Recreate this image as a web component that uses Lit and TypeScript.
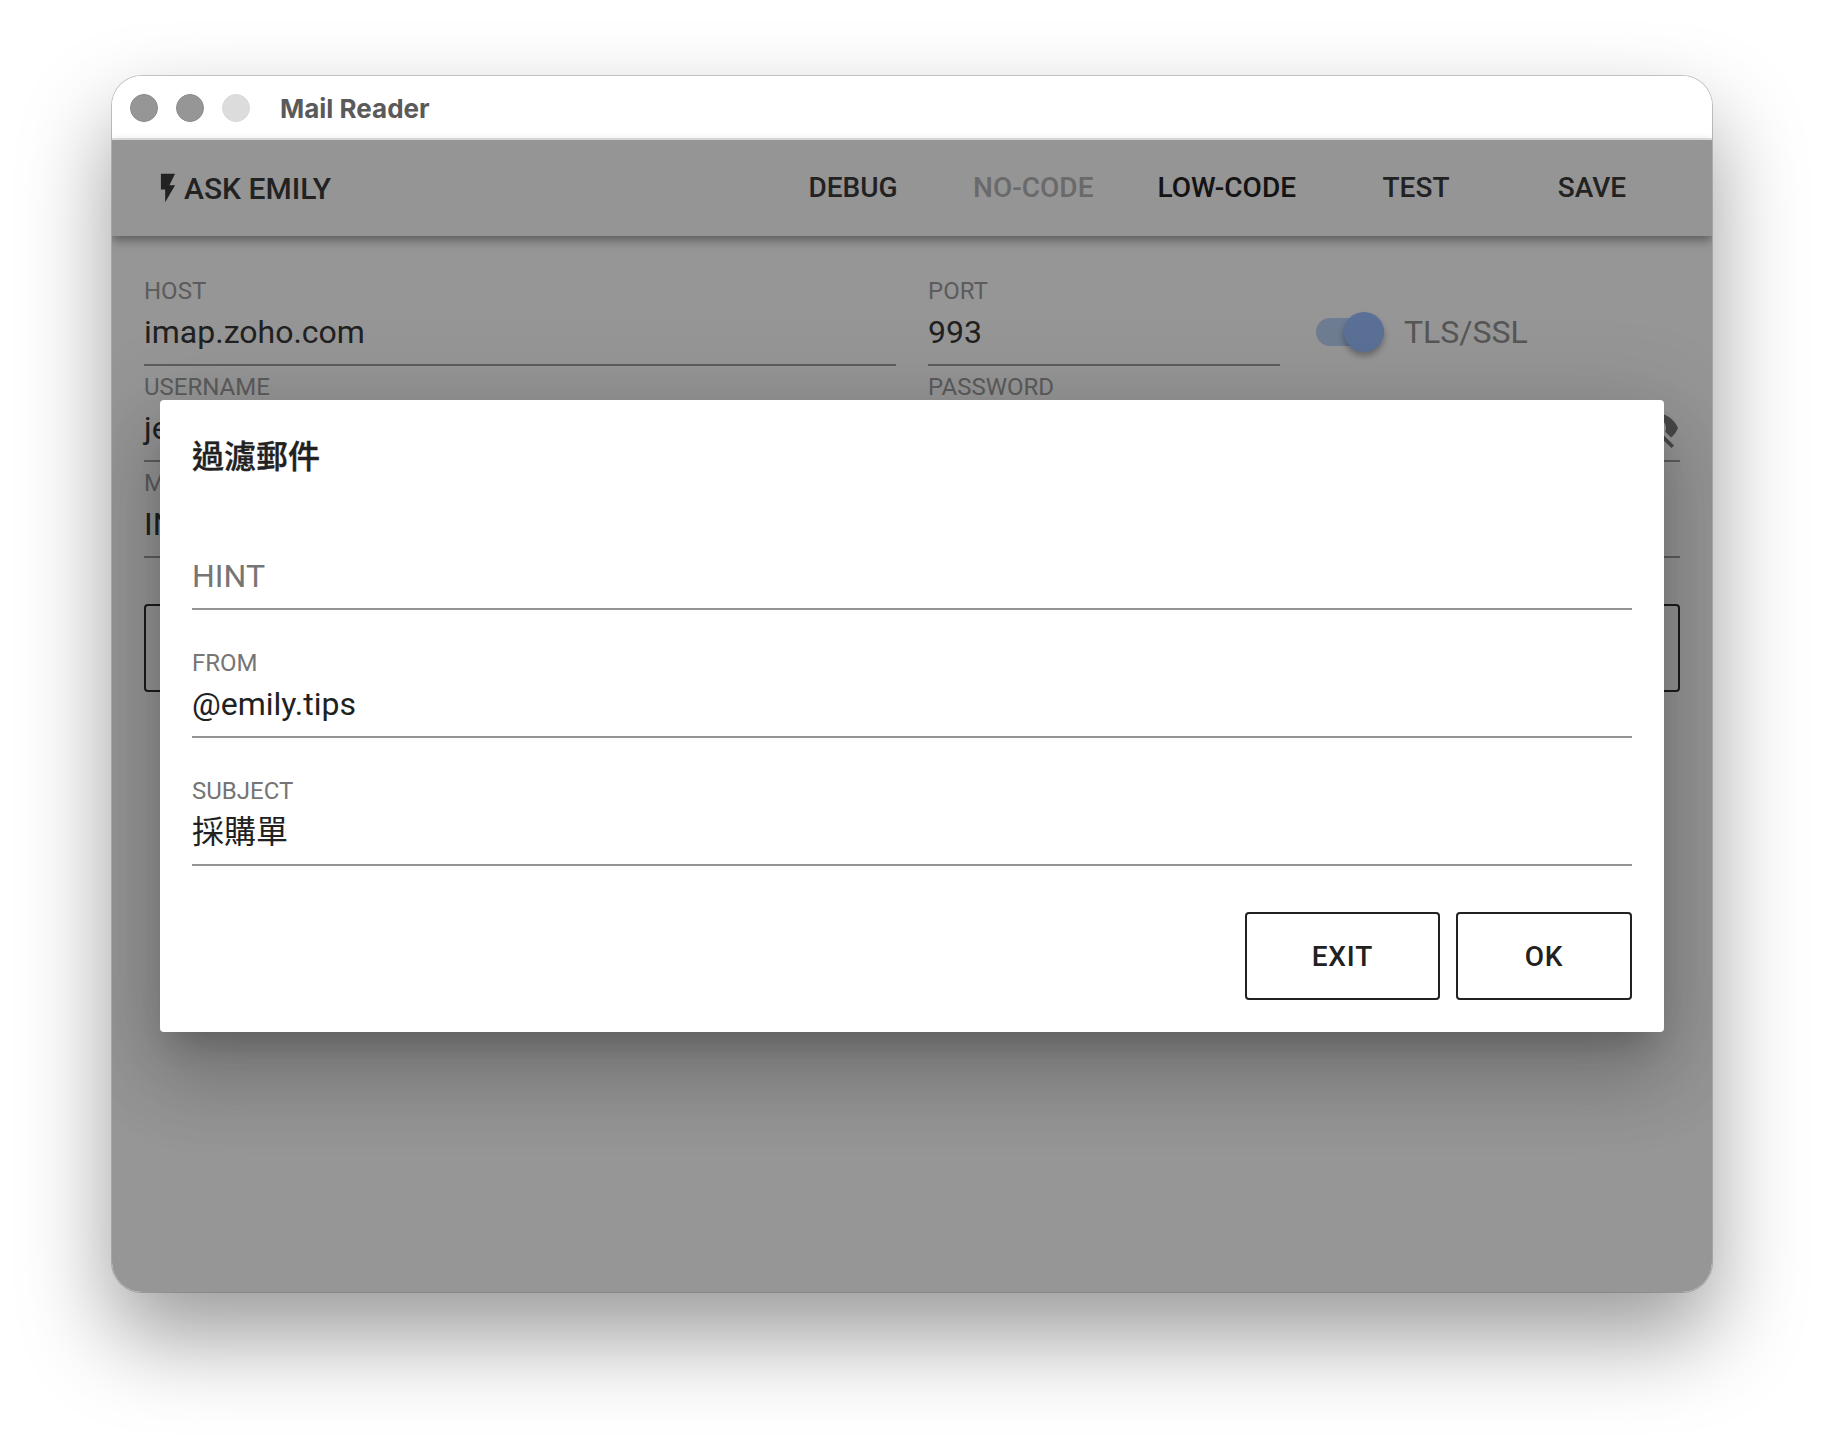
import { LitElement, html, css } from "lit";
import { customElement } from "lit/decorators.js";

const FONT = css`Roboto, "Noto Sans CJK TC", sans-serif`;

@customElement("app-root")
export class AppRoot extends LitElement {
  static styles = css`
    :host {
      display: block;
      box-sizing: border-box;
      height: 1440px;
      padding: 76px 112px 0;
      background: #fff;
      font-family: ${FONT};
    }
    * { box-sizing: border-box; }
    .window {
      width: 1600px;
      height: 1216px;
      border-radius: 30px;
      overflow: hidden;
      display: flex;
      flex-direction: column;
      background: #fff;
      box-shadow: 0 0 0 1px rgba(0,0,0,.2), 0 44px 90px rgba(0,0,0,.4);
    }
    .titlebar {
      flex: none;
      height: 64px;
      display: flex;
      align-items: center;
      padding: 2px 0 0 18px;
      gap: 18px;
      background: #fff;
      border-bottom: 2px solid #e6e6e6;
    }
    .dot { width: 28px; height: 28px; border-radius: 50%; background: #969696; border: 1px solid #8a8a8a; }
    .dot.off { background: #dcdcdc; border-color: #d8d8d8; }
    .title { margin-left: 12px; font: 700 26px Inter, sans-serif; color: #5a5a5a; }
    .content { flex: 1; position: relative; display: flex; flex-direction: column; background: #fff; }
    .toolbar {
      flex: none;
      height: 96px;
      display: flex;
      align-items: center;
      justify-content: flex-end;
      padding: 0 32px 0 39px;
      background: #fdfdfd;
      box-shadow: 0 4px 10px rgba(0,0,0,.4);
    }
    .ask { display: flex; align-items: center; margin-right: auto; font-size: 30px; font-weight: 500; color: #3a3a3a; }
    .ask svg { width: 34px; height: 34px; fill: #3a3a3a; margin-right: -1px; }
    .tb {
      min-width: 176px;
      padding: 0 32px 2px;
      text-align: center;
      font-size: 28px;
      font-weight: 500;
      color: #3a3a3a;
    }
    .tb.disabled { color: #b5b5b5; }
    .tb.active { color: #222; }
    .form {
      padding: 34px 32px 0;
      display: grid;
      grid-template-columns: 752px 352px 1fr;
      column-gap: 32px;
    }
    .field {
      position: relative;
      height: 96px;
      padding-top: 5px;
      border-bottom: 2px solid #a1a1a1;
    }
    .label { height: 32px; line-height: 32px; font-size: 24px; color: #9c9c9c; }
    .value { margin-top: 1px; height: 48px; line-height: 48px; font-size: 32px; color: #383838; }
    .wide { grid-column: 2 / 4; }
    .full { grid-column: 1 / -1; }
    .eye { position: absolute; right: 0; top: 38px; width: 48px; height: 48px; fill: #7d7d7d; }
    .tls { display: flex; align-items: flex-start; margin: 42px 0 0 4px; gap: 20px; }
    .switch { position: relative; width: 68px; height: 40px; }
    .track { position: absolute; left: 0; top: 6px; width: 68px; height: 28px; border-radius: 14px; background: #bcd4f8; }
    .thumb {
      position: absolute;
      left: 28px;
      top: 0;
      width: 40px;
      height: 40px;
      border-radius: 50%;
      background: #9abeff;
      box-shadow: 0 4px 6px rgba(0,0,0,.3);
    }
    .tls-text { line-height: 40px; font-size: 32px; color: #939393; }
    .outline {
      margin: 46px 32px 0;
      height: 88px;
      border: 2px solid #303030;
      border-radius: 4px;
      display: flex;
      align-items: center;
      justify-content: center;
      font-size: 28px;
      font-weight: 500;
      color: #303030;
    }
    .backdrop {
      position: absolute;
      inset: 0;
      display: flex;
      align-items: center;
      justify-content: center;
      background: rgba(0,0,0,.41);
    }
    .dialog {
      width: 1504px;
      height: 632px;
      padding: 32px;
      border-radius: 4px;
      background: #fff;
      display: flex;
      flex-direction: column;
      box-shadow: 0 22px 30px -14px rgba(0,0,0,.2), 0 48px 76px 6px rgba(0,0,0,.14), 0 18px 92px 16px rgba(0,0,0,.12);
    }
    .dialog-title {
      margin-top: 1px;
      height: 48px;
      line-height: 48px;
      font-size: 32px;
      font-weight: 500;
      -webkit-text-stroke: 0.4px #212121;
      color: #212121;
    }
    .fields { display: flex; flex-direction: column; gap: 32px; margin-top: 33px; }
    .dialog .field { border-bottom-color: #949494; }
    .dialog .label { color: #757575; }
    .dialog .value { color: #212121; }
    .dialog .value.placeholder { color: #757575; }
    .actions { display: flex; justify-content: flex-end; gap: 16px; margin-top: 46px; }
    .btn {
      min-width: 176px;
      height: 88px;
      padding: 0 65px;
      display: flex;
      align-items: center;
      justify-content: center;
      border: 2px solid #212121;
      border-radius: 4px;
      font-size: 28px;
      font-weight: 500;
      letter-spacing: 0.8px;
      color: #212121;
    }
  `;

  private field(label: string, value: string, cls = "", valueCls = "") {
    return html`<div class="field ${cls}">
      <div class="label">${label}</div>
      <div class="value ${valueCls}">${value}</div>
    </div>`;
  }

  render() {
    return html`
      <div class="window">
        <div class="titlebar">
          <span class="dot"></span><span class="dot"></span><span class="dot off"></span>
          <span class="title">Mail Reader</span>
        </div>
        <div class="content">
          <div class="toolbar">
            <div class="ask">
              <svg viewBox="0 0 24 24"><path d="M7 2v11h3v9l7-12h-4l4-8z"></path></svg>
              <span>ASK EMILY</span>
            </div>
            <div class="tb">DEBUG</div>
            <div class="tb disabled">NO-CODE</div>
            <div class="tb active">LOW-CODE</div>
            <div class="tb">TEST</div>
            <div class="tb">SAVE</div>
          </div>
          <div class="form">
            ${this.field("HOST", "imap.zoho.com")}
            ${this.field("PORT", "993")}
            <div class="tls">
              <div class="switch"><span class="track"></span><span class="thumb"></span></div>
              <span class="tls-text">TLS/SSL</span>
            </div>
            ${this.field("USERNAME", "jeff@emily.tips")}
            <div class="field wide">
              <div class="label">PASSWORD</div>
              <div class="value">••••••••</div>
              <svg class="eye" viewBox="0 0 24 24"><path d="M12 7c2.76 0 5 2.24 5 5 0 .65-.13 1.26-.36 1.83l2.92 2.92c1.51-1.26 2.7-2.89 3.43-4.75-1.73-4.39-6-7.5-11-7.5-1.4 0-2.74.25-3.98.7l2.16 2.16C10.74 7.13 11.35 7 12 7zM2 4.27l2.28 2.28.46.46C3.08 8.3 1.78 10.02 1 12c1.73 4.39 6 7.5 11 7.5 1.55 0 3.03-.3 4.38-.84l.42.42L19.73 22 21 20.73 3.27 3 2 4.27zM7.53 9.8l1.55 1.55c-.05.21-.08.43-.08.65 0 1.66 1.34 3 3 3 .22 0 .44-.03.65-.08l1.55 1.55c-.67.33-1.41.53-2.2.53-2.76 0-5-2.24-5-5 0-.79.2-1.53.53-2.2zm4.31-.78l3.15 3.15.02-.16c0-1.66-1.34-3-3-3l-.17.01z"></path></svg>
            </div>
            ${this.field("MAILBOX", "INBOX", "full")}
          </div>
          <div class="outline">過濾郵件</div>
          <div class="backdrop">
            <div class="dialog">
              <div class="dialog-title">過濾郵件</div>
              <div class="fields">
                ${this.field("", "HINT", "", "placeholder")}
                ${this.field("FROM", "@emily.tips")}
                ${this.field("SUBJECT", "採購單")}
              </div>
              <div class="actions">
                <div class="btn">EXIT</div>
                <div class="btn">OK</div>
              </div>
            </div>
          </div>
        </div>
      </div>
    `;
  }
}
